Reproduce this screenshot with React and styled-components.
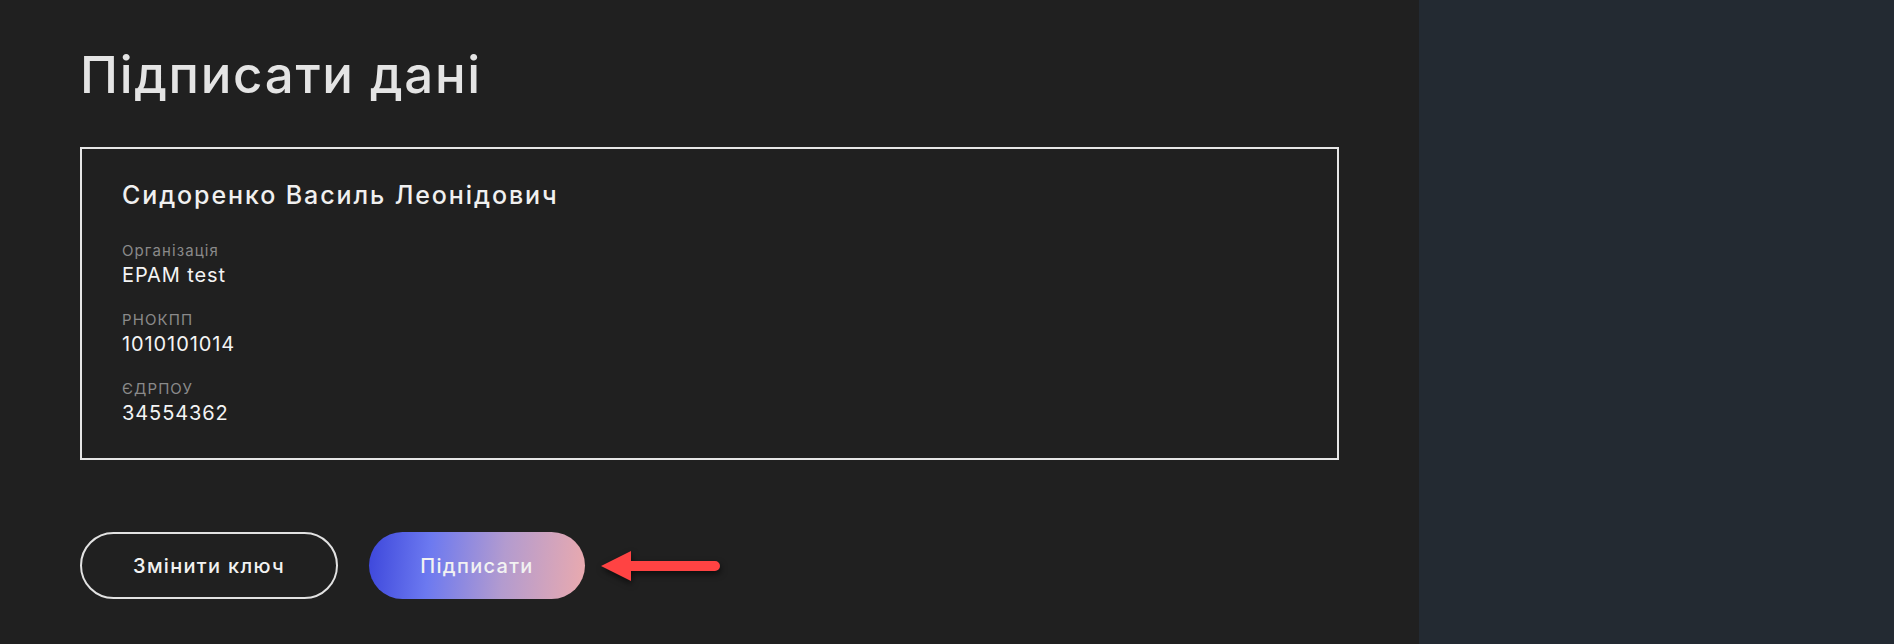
import React from 'react';
import styled, { createGlobalStyle } from 'styled-components';

const GlobalStyle = createGlobalStyle`
  html, body {
    margin: 0;
    padding: 0;
    background: #202020;
  }
  * {
    box-sizing: border-box;
  }
`;

const fields = [
  { label: 'Організація', value: 'EPAM test' },
  { label: 'РНОКПП', value: '1010101014' },
  { label: 'ЄДРПОУ', value: '34554362' },
];

const Arrow = () => (
  <ArrowSvg width="126" height="40" viewBox="0 0 126 40">
    <path
      d="M2 20 L32 5 L32 15 L116 15 A5 5 0 0 1 116 25 L32 25 L32 35 Z"
      fill="#ff4343"
    />
  </ArrowSvg>
);

const App = () => {
  return (
    <>
      <GlobalStyle />
      <Page>
        <Main>
          <Title>Підписати дані</Title>
          <Card>
            <Name>Сидоренко Василь Леонідович</Name>
            <Fields>
              {fields.map((f) => (
                <Field key={f.label}>
                  <Label>{f.label}</Label>
                  <Value>{f.value}</Value>
                </Field>
              ))}
            </Fields>
          </Card>
          <Actions>
            <Button>Змінити ключ</Button>
            <Button $primary>Підписати</Button>
            <Arrow />
          </Actions>
        </Main>
        <Aside />
      </Page>
    </>
  );
};

const Page = styled.div`
  display: flex;
  width: 100vw;
  height: 100vh;
  font-family: Inter, "DejaVu Sans", sans-serif;
  overflow: hidden;
`;

const Main = styled.main`
  width: 1419px;
  flex-shrink: 0;
  background: #202020;
  padding: 44px 0 0 80px;
`;

const Aside = styled.aside`
  flex: 1;
  background: #232a32;
`;

const Title = styled.h1`
  margin: 0;
  font-size: 51px;
  line-height: 62px;
  font-weight: 500;
  color: #e4e4e4;
  letter-spacing: 1.7px;
`;

const Card = styled.section`
  width: 1259px;
  margin-top: 41px;
  border: 2px solid #e6e6e6;
  padding: 31px 40px 33px;
`;

const Name = styled.div`
  font-size: 25px;
  line-height: 30px;
  font-weight: 500;
  color: #f0f0f0;
  letter-spacing: 1.9px;
`;

const Fields = styled.div`
  display: flex;
  flex-direction: column;
  gap: 24px;
  margin-top: 32px;
`;

const Field = styled.div`
  display: flex;
  flex-direction: column;
  gap: 3px;
`;

const Label = styled.div`
  font-size: 15px;
  line-height: 18px;
  color: #8a8a8a;
  letter-spacing: 1.1px;
`;

const Value = styled.div`
  font-size: 20px;
  line-height: 24px;
  color: #f4f4f4;
  letter-spacing: 0.9px;
`;

const Actions = styled.div`
  display: flex;
  align-items: center;
  gap: 31px;
  margin-top: 72px;
`;

const Button = styled.button`
  height: 67px;
  width: ${(p) => (p.$primary ? '216px' : '258px')};
  border-radius: 34px;
  border: ${(p) => (p.$primary ? 'none' : '2px solid #e2e2e2')};
  background: ${(p) =>
    p.$primary
      ? 'linear-gradient(95deg, #3d47db 0%, #6c79f0 28%, #b39bcf 62%, #eaaaae 100%)'
      : 'transparent'};
  color: #f2f2f2;
  font-family: inherit;
  font-size: 20px;
  font-weight: 500;
  letter-spacing: 1.3px;
  padding: 0;
  cursor: pointer;
`;

const ArrowSvg = styled.svg`
  margin-left: -17px;
  filter: drop-shadow(1px 3px 3px rgba(0, 0, 0, 0.6));
`;

export default App;
